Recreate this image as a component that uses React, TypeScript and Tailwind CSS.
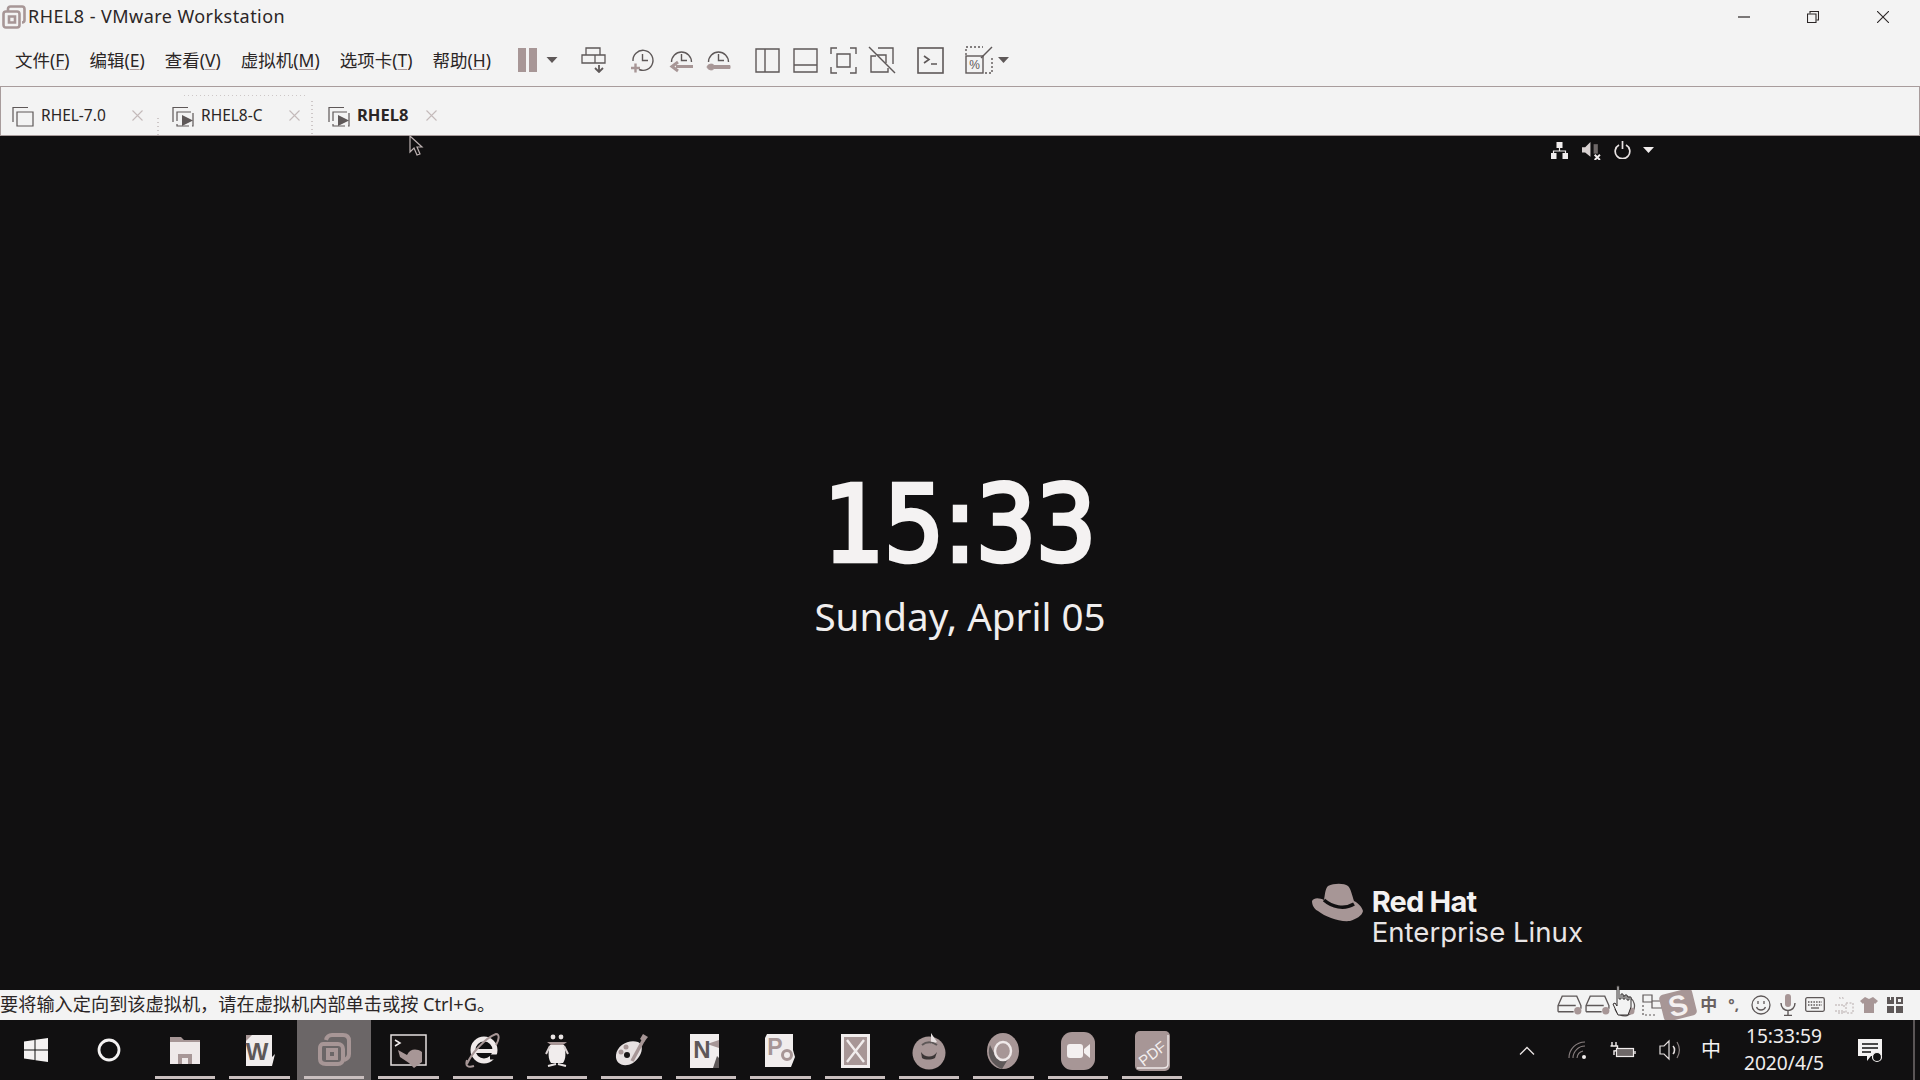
import React from "react";

const M = "#a79696";
const G = "#5e5858";
const MENU: [string, string][] = [
  ["文件", "F"],
  ["编辑", "E"],
  ["查看", "V"],
  ["虚拟机", "M"],
  ["选项卡", "T"],
  ["帮助", "H"],
];

function Caret({ c = G, w = 11, cls = "" }: { c?: string; w?: number; cls?: string }) {
  return (
    <svg width={w} height={6} viewBox="0 0 11 6" className={cls}>
      <path d="M0 0H11L5.5 6Z" fill={c} />
    </svg>
  );
}

function Clock({ kind }: { kind: "plus" | "arrow" | "wrench" }) {
  return (
    <svg width="25" height="25" viewBox="0 0 25 25" fill="none" stroke={G} strokeWidth="1.4">
      <path d={kind === "plus" ? "M3 13A10 10 0 1 1 9 21.5" : "M2.5 14A10 10 0 1 1 22.5 14"} />
      <path d="M12.5 6V12.5H18" />
      {kind === "plus" && <path d="M1 20H10M5.5 15.5V24.5" stroke={M} strokeWidth="2.4" />}
      {kind === "arrow" && <path d="M24 18.5H7M9 14L3 18.5L9 23" stroke={M} strokeWidth="3" />}
      {kind === "wrench" && <path d="M1 18.5C3 15.5 7 15.5 8 17.5H24V20.5H8C7 22.5 3 22.5 1 19.5" fill={M} stroke={M} strokeWidth="1" />}
    </svg>
  );
}

function TabIcon({ play }: { play?: boolean }) {
  return (
    <svg width="22" height="22" viewBox="0 0 22 22" fill="none" stroke={G} strokeWidth="1.2">
      <path d="M1 17V2.5H16" />
      <path d="M5 7H21V21H5Z" strokeDasharray={play ? "14 3" : undefined} />
      {play && <path d="M10 10V21L21 15.5Z" fill={G} stroke="none" />}
    </svg>
  );
}

function TabClose() {
  return (
    <svg width="11" height="11" viewBox="0 0 11 11" stroke="#c4baba" strokeWidth="1.1">
      <path d="M0.5 0.5L10.5 10.5M10.5 0.5L0.5 10.5" />
    </svg>
  );
}

function Tab({ label, bold, play, w, gap }: { label: string; bold?: boolean; play?: boolean; w: string; gap: string }) {
  return (
    <div className={`flex items-center shrink-0 ${w}`}>
      <TabIcon play={play} />
      <span className={`ml-[7px] text-[#2b2626] ${bold ? "font-bold text-[16.5px]" : "text-[15.5px]"}`}>{label}</span>
      <span className={gap}>
        <TabClose />
      </span>
    </div>
  );
}

function DiskIcon() {
  return (
    <svg width="26" height="21" viewBox="0 0 25 20" fill="none" stroke={G} strokeWidth="1.3" className="shrink-0">
      <path d="M1 17V11L5 2H19L23 11V14" />
      <path d="M1 11H18M1 17H16" />
      <circle cx="20" cy="16" r="3.5" fill={M} stroke="none" />
    </svg>
  );
}

function AppIcon({ i }: { i: number }) {
  const common = { width: 40, height: 40, viewBox: "0 0 40 40", className: "overflow-visible" };
  switch (i) {
    case 0:
      return (
        <svg {...common}>
          <path d="M5 7H16L19 10H35V12H5Z" fill={M} />
          <path d="M5 12H35V34H5Z" fill="#efe9e9" />
          <path d="M13 24H27V34H23V28H17V34H13Z" fill={M} />
        </svg>
      );
    case 1:
      return (
        <svg {...common}>
          <path d="M6 5H32V27L35 24L32 36H6Z" fill="#f1eded" />
          <path d="M6 5L12 5L6 11Z" fill={M} />
          <text x="17" y="30" textAnchor="middle" fontSize="24" fontWeight="700" fill={G} fontFamily="Liberation Sans">W</text>
        </svg>
      );
    case 2:
      return (
        <svg {...common} fill="none" stroke={M} strokeWidth="4">
          <path d="M12 10C13 6 15 5 18 5H29C33 5 35 7 35 11V24C35 27 33 29 30 30" />
          <path d="M9 14H24C27 14 29 16 29 19V29C29 32 27 34 24 34H12C8 34 6 32 6 29V18C6 16 7 14 9 14Z" />
          <path d="M14 20H22V28H14Z" />
        </svg>
      );
    case 3:
      return (
        <svg {...common}>
          <rect x="3" y="5" width="35" height="30" fill="#181515" stroke="#e5dfdf" strokeWidth="1.5" />
          <path d="M7 10L12 13L7 16" fill="none" stroke="#f1eded" strokeWidth="1.5" />
          <path d="M10 20L19 25C22 19 28 18 34 22L34 32L26 38L21 33L12 27Z" fill={M} />
        </svg>
      );
    case 4:
      return (
        <svg {...common}>
          <circle cx="21" cy="20" r="11" fill="none" stroke="#efe9e9" strokeWidth="5" />
          <path d="M9 21H33" stroke="#efe9e9" strokeWidth="4" />
          <path d="M27 27L36 27" stroke="#111011" strokeWidth="5" />
          <path d="M4 34C8 24 22 8 33 4C37 4 36 10 33 15" fill="none" stroke={M} strokeWidth="2" />
          <path d="M4 30C2 36 5 38 11 36" fill="none" stroke={M} strokeWidth="2" />
        </svg>
      );
    case 5:
      return (
        <svg {...common}>
          <circle cx="16" cy="7" r="2.4" fill="#e9e3e3" />
          <circle cx="24" cy="7" r="2.4" fill="#e9e3e3" />
          <path d="M10 12H30L26 15H14Z" fill={M} />
          <path d="M13 15H27C29 22 29 29 26 33H14C11 29 11 22 13 15Z" fill="#f1eded" />
          <path d="M13 16L9 24M27 16L31 24" stroke="#d9d1d1" strokeWidth="2" />
          <path d="M11 36L19 34M21 34L29 36" stroke="#e9e3e3" strokeWidth="2" />
        </svg>
      );
    case 6:
      return (
        <svg {...common}>
          <path d="M4 25C5 15 17 9 26 12C33 15 30 27 21 33C12 38 3 34 4 25Z" fill="#e7e1e1" />
          <circle cx="15" cy="25" r="3" fill="#181515" />
          <circle cx="14" cy="17" r="2.5" fill={M} />
          <circle cx="9" cy="22" r="2.5" fill={M} />
          <path d="M20 31L32 9" stroke={M} strokeWidth="3.5" />
          <path d="M31 4L36 7L32 12L28 9Z" fill={M} />
        </svg>
      );
    case 7:
      return (
        <svg {...common}>
          <path d="M4 4H33V28L31 38H4Z" fill="#f1eded" />
          <path d="M21 14L33 10V18Z" fill={M} />
          <path d="M27 38L31 26L33 28V38Z" fill={G} />
          <text x="16" y="28" textAnchor="middle" fontSize="24" fontWeight="700" fill={G} fontFamily="Liberation Sans">N</text>
        </svg>
      );
    case 8:
      return (
        <svg {...common}>
          <path d="M7 4H33V20L35 27L31 37H5V8Z" fill="#f1eded" />
          <text x="15" y="25" textAnchor="middle" fontSize="23" fontWeight="700" fill={M} fontFamily="Liberation Sans">P</text>
          <circle cx="27" cy="25" r="4.5" fill="none" stroke={M} strokeWidth="3" />
        </svg>
      );
    case 9:
      return (
        <svg {...common}>
          <rect x="6" y="4" width="29" height="34" fill="#f1eded" />
          <rect x="9" y="7" width="23" height="28" fill={M} />
          <path d="M12 10L29 32M29 10L12 32" stroke="#f1eded" strokeWidth="2.4" />
        </svg>
      );
    case 10:
      return (
        <svg {...common}>
          <circle cx="20" cy="23" r="16.5" fill={M} />
          <path d="M22 3L28 12L22 14Z" fill="#e7e1e1" />
          <path d="M12 22C16 28 24 28 28 22L26 28C22 30 16 30 13 28Z" fill="#3b3636" />
          <path d="M13 15C18 11 24 12 28 15" stroke={G} strokeWidth="2" fill="none" />
        </svg>
      );
    case 11:
      return (
        <svg {...common}>
          <ellipse cx="20" cy="21" rx="16" ry="18" fill={M} />
          <path d="M7 15C3 26 9 35 19 39L27 26L13 27Z" fill="#5e5858" />
          <ellipse cx="20" cy="21" rx="8" ry="9" fill={M} stroke="#efe9e9" strokeWidth="2.4" />
        </svg>
      );
    case 12:
      return (
        <svg {...common}>
          <rect x="3" y="2" width="34" height="38" rx="11" fill={M} />
          <rect x="9" y="14" width="16" height="14" rx="3" fill="#f4f0f0" />
          <path d="M26 19L32 14V28L26 23Z" fill="#f4f0f0" />
        </svg>
      );
    default:
      return (
        <svg {...common}>
          <rect x="3" y="1" width="35" height="40" rx="5" fill={M} />
          <path d="M36 5V34C36 37 34 38 31 38H5" fill="none" stroke="#efe9e9" strokeWidth="1.4" />
          <text x="20" y="29" textAnchor="middle" fontSize="15" fill="#f4f0f0" transform="rotate(-38 20 23)" fontFamily="Liberation Sans">PDF</text>
        </svg>
      );
  }
}

export default function App() {
  return (
    <div className="relative flex flex-col w-[1920px] h-[1080px] overflow-hidden bg-[#111011] font-['Noto_Sans','Noto_Sans_CJK_SC',sans-serif]">
      {/* window title */}
      <div className="flex items-center h-[33px] bg-[#f3f3f3] shrink-0">
        <svg width="24" height="24" viewBox="0 0 24 24" fill="none" stroke={M} strokeWidth="2.6" className="ml-[2px] mt-[1px] shrink-0">
          <path d="M6 6V4C6 2.5 7 1.5 8.5 1.5H20C21.5 1.5 22.5 2.5 22.5 4V15C22.5 16.5 21.5 17.5 20 17.5" />
          <path d="M4 6.5H15C16.5 6.5 17.5 7.5 17.5 9V20C17.5 21.5 16.5 22.5 15 22.5H4C2.5 22.5 1.5 21.5 1.5 20V9C1.5 7.5 2.5 6.5 4 6.5Z" />
          <path d="M7 11.5H13V17.5H7Z" />
        </svg>
        <span className="ml-[2px] text-[18px] text-[#2b2626] tracking-[0.45px]">RHEL8 - VMware Workstation</span>
        <div className="ml-auto flex items-center">
          <svg width="12" height="12" viewBox="0 0 12 12" stroke="#2b2626" strokeWidth="1.2" className="mr-[57px]">
            <path d="M0 6H12" />
          </svg>
          <svg width="12" height="12" viewBox="0 0 12 12" fill="none" stroke="#2b2626" strokeWidth="1.1" className="mr-[58px]">
            <path d="M3 2.5V0.5H11.5V9H9.5" />
            <path d="M0.5 3H9V11.5H0.5Z" />
          </svg>
          <svg width="12" height="12" viewBox="0 0 12 12" stroke="#2b2626" strokeWidth="1.1" className="mr-[31px]">
            <path d="M0 0L12 12M12 0L0 12" />
          </svg>
        </div>
      </div>

      {/* menu + toolbar */}
      <div className="flex items-center h-[54px] bg-[#f3f3f3] border-b border-[#a89c9c] shrink-0 pl-[15px] pt-[1px]">
        <div className="flex gap-[20px] w-[503px] shrink-0 text-[17.5px] text-[#2b2626] whitespace-nowrap">
          {MENU.map(([t, k]) => (
            <span key={k}>
              {t}(<span className="underline decoration-[#a79696] underline-offset-2">{k}</span>)
            </span>
          ))}
        </div>
        <div className="flex gap-[3px] shrink-0">
          <div className="w-[8px] h-[24px] bg-[#a79696]" />
          <div className="w-[8px] h-[24px] bg-[#a79696]" />
        </div>
        <Caret cls="ml-[9px] shrink-0" w={12} />
        <svg width="25" height="26" viewBox="0 0 25 26" fill="none" stroke={G} strokeWidth="1.3" className="ml-[23px] shrink-0">
          <path d="M5 8V1H19V8" />
          <path d="M1 8H24V16H1Z" />
          <path d="M14 8V16" />
          <path d="M18 18V24M14 21L18 25L22 21" strokeWidth="1.8" />
        </svg>
        <div className="ml-[24px] shrink-0"><Clock kind="plus" /></div>
        <div className="ml-[14px] shrink-0"><Clock kind="arrow" /></div>
        <div className="ml-[12px] shrink-0"><Clock kind="wrench" /></div>
        <svg width="25" height="25" viewBox="0 0 25 25" fill="none" stroke={G} strokeWidth="1.4" className="ml-[24px] shrink-0">
          <path d="M1 1H24V24H1Z M10 1V24" />
        </svg>
        <svg width="25" height="25" viewBox="0 0 25 25" fill="none" stroke={G} strokeWidth="1.4" className="ml-[13px] shrink-0">
          <path d="M1 1H24V24H1Z M1 17H24" />
        </svg>
        <svg width="27" height="27" viewBox="0 0 27 27" fill="none" stroke={G} strokeWidth="1.4" className="ml-[12px] shrink-0">
          <path d="M1 7V1H7M20 1H26V7M26 20V26H20M7 26H1V20" />
          <path d="M7 7H20V20H7Z" />
        </svg>
        <svg width="28" height="28" viewBox="0 0 28 28" fill="none" stroke={G} strokeWidth="1.4" className="ml-[11px] shrink-0">
          <path d="M10 2H25V18M20 22V26H3V10H8" />
          <path d="M9 9H18V17" />
          <path d="M1 1L27 27" />
        </svg>
        <svg width="27" height="27" viewBox="0 0 27 27" fill="none" stroke={G} strokeWidth="1.6" className="ml-[21px] shrink-0">
          <rect x="1" y="1" width="25" height="25" />
          <path d="M7 9L12 12.5L7 16M14 17H20" />
        </svg>
        <svg width="28" height="28" viewBox="0 0 28 28" fill="none" stroke={G} strokeWidth="1.4" className="ml-[21px] shrink-0">
          <path d="M1 9V1H18" strokeDasharray="2 2" />
          <path d="M27 12V27H20" strokeDasharray="2 2" />
          <path d="M16 12L27 1" />
          <rect x="1" y="10" width="17" height="17" />
          <text x="9.5" y="23" textAnchor="middle" fontSize="12" fill={G} stroke="none" fontFamily="Liberation Sans">%</text>
        </svg>
        <Caret cls="ml-[5px] shrink-0" />
      </div>

      {/* tabs */}
      <div className="relative flex items-center h-[48px] bg-[#f3f3f3] border-r border-l border-[#a89c9c] shrink-0 pl-[11px] pt-[9px]">
        <Tab label="RHEL-7.0" w="w-[160px]" gap="ml-[26px] flex" />
        <Tab label="RHEL8-C" play w="w-[156px]" gap="ml-[26px] flex" />
        <Tab label="RHEL8" bold play w="w-[160px]" gap="ml-[18px] flex" />
        <svg width="160" height="40" viewBox="0 0 160 40" fill="none" stroke="#a89c9c" strokeDasharray="1 3" className="absolute left-[155px] top-[8px]">
          <path d="M2 40V20M28 0H150M156 6V40" />
        </svg>
      </div>

      {/* guest display */}
      <div className="relative flex flex-col flex-1 min-h-0 bg-[#111011] border-t border-[#a89c9c]">
        <div className="flex items-center justify-end pr-[266px] pt-[5px] h-[23px]">
          <svg width="17" height="17" viewBox="0 0 17 17" fill="#f1eded" className="mr-[14px]">
            <rect x="5.5" y="0" width="6" height="6" />
            <path d="M8.5 6V9M2.5 11V9H14.5V11" stroke="#f1eded" fill="none" strokeWidth="1.2" />
            <rect x="0" y="11" width="5.5" height="6" />
            <rect x="11.5" y="11" width="5.5" height="6" />
          </svg>
          <svg width="19" height="19" viewBox="0 0 18 18" className="mr-[13px]">
            <path d="M0 6H3L8 1V15L3 11H0Z" fill="#d8d1d1" />
            <path d="M11 3H15V12H11Z" fill="#6e6868" />
            <path d="M12 13L17 18M17 13L12 18" stroke="#f1eded" strokeWidth="1.8" />
          </svg>
          <svg width="17" height="18" viewBox="0 0 17 18" fill="none" stroke="#e9e3e3" strokeWidth="1.7" className="mr-[12px]">
            <path d="M5 4A7.3 7.3 0 1 0 12 4M8.5 0V8" />
          </svg>
          <Caret c="#f1eded" />
        </div>

        <div className="flex flex-col items-center mt-[306px]">
          <div className="font-['DejaVu_Sans_Condensed','DejaVu_Sans',sans-serif] font-normal text-[105px] leading-[120px] text-[#f4f2f2] [-webkit-text-stroke:4.5px_#f4f2f2]">15:33</div>
          <div className="mt-[6px] text-[38.6px] leading-[50px] text-[#f0eeee]">Sunday, April 05</div>
        </div>

        <div className="flex items-center justify-end mt-auto pr-[337px] pb-[39px]">
          <svg width="52" height="40" viewBox="0 0 52 40" className="mr-[8px] mb-[28px]">
            <path d="M16 3C22 0 32 0 36 3C39 6 40 12 42 18C46 20 50 24 51 28C50 33 44 36 38 38C26 39 14 34 6 28C2 26 0 22 0 18C2 14 8 15 12 17C13 12 13 6 16 3Z" fill={M} />
            <path d="M12 17C20 24 32 27 42 21" fill="none" stroke="#111011" strokeWidth="3.5" />
          </svg>
          <div className="flex flex-col font-['Inter',sans-serif]">
            <span className="text-[29px] leading-[30px] font-bold text-[#f4f2f2] tracking-[-0.8px]">Red Hat</span>
            <span className="text-[27.6px] leading-[30px] text-[#e9e5e5]">Enterprise Linux</span>
          </div>
        </div>

        <svg width="16" height="22" viewBox="0 0 16 22" className="absolute left-[409px] top-[-1px]">
          <path d="M1 1V17L5 13L8 20L11 19L8 12H13Z" fill="#111011" stroke="#bdb2b2" strokeWidth="1.2" />
        </svg>
      </div>

      {/* status bar */}
      <div className="flex items-center h-[30px] bg-[#f3f3f3] shrink-0 border-b border-[#f3f3f3]">
        <span className="text-[18.2px] text-[#2b2626] whitespace-nowrap">要将输入定向到该虚拟机，请在虚拟机内部单击或按 Ctrl+G。</span>
        <div className="ml-auto flex items-center pr-[17px] h-full">
          <DiskIcon />
          <div className="ml-[2px]"><DiskIcon /></div>
          <svg width="26" height="24" viewBox="0 0 26 24" fill="none" stroke={G} strokeWidth="1.3" className="shrink-0">
            <path d="M12 3A10 10 0 1 1 4 16" />
            <circle cx="20" cy="18" r="3.5" fill={M} stroke="none" />
          </svg>
          <svg width="26" height="22" viewBox="0 0 26 22" fill="none" stroke={G} strokeWidth="1.2" className="ml-[5px] shrink-0">
            <path d="M1 1H10V8H1ZM10 7H20V14H10Z" />
            <path d="M1 11V21H15" strokeDasharray="2 2" />
          </svg>
          <svg width="38" height="36" viewBox="0 0 36 34" className="ml-[-9px] shrink-0 overflow-visible">
            <g transform="rotate(-14 18 17)">
              <rect x="2" y="4" width="32" height="26" rx="4" fill={M} />
              <text x="18" y="27" textAnchor="middle" fontSize="27" fontWeight="700" fill="#f4f0f0" fontFamily="Liberation Sans">S</text>
            </g>
          </svg>
          <span className="ml-[3px] text-[17px] leading-none text-[#6a6262] font-bold">中</span>
          <span className="ml-[11px] text-[15px] leading-none text-[#6a6262] font-bold">°,</span>
          <svg width="20" height="20" viewBox="0 0 20 20" fill="none" stroke={G} strokeWidth="1.3" className="ml-[12px] shrink-0">
            <circle cx="10" cy="10" r="9" />
            <path d="M5.5 12C7 16 13 16 14.5 12" />
            <path d="M7 6V9M13 6V9" />
          </svg>
          <svg width="16" height="22" viewBox="0 0 16 22" fill="none" stroke={G} strokeWidth="1.4" className="ml-[9px] shrink-0">
            <rect x="5" y="0" width="6" height="13" rx="3" fill={M} stroke="none" />
            <path d="M1 9C1 19 15 19 15 9M8 16V21M4 21.5H12" />
          </svg>
          <svg width="20" height="15" viewBox="0 0 20 15" fill="none" stroke={G} strokeWidth="1.3" className="ml-[9px] shrink-0">
            <rect x="0.7" y="0.7" width="18.6" height="13.6" rx="1.5" />
            <path d="M3 5H17M3 8H17" strokeDasharray="1.5 1.2" />
            <path d="M6 11H14" />
          </svg>
          <svg width="20" height="20" viewBox="0 0 20 20" fill="none" stroke="#b6abab" strokeWidth="1" className="ml-[9px] shrink-0">
            <path d="M6 2C5 3 7 4 6 5M9 2C8 3 10 4 9 5M1 10H10V13M1 16H10V18H3" strokeDasharray="2 1" />
            <path d="M12 8H19V18H12Z" strokeDasharray="2 1.5" />
          </svg>
          <svg width="18" height="18" viewBox="0 0 18 18" fill={M} className="ml-[6px] shrink-0">
            <path d="M5 1L9 3L13 1L18 5L15 8L14 7V17H4V7L3 8L0 5Z" />
          </svg>
          <svg width="16" height="16" viewBox="0 0 16 16" fill={G} className="ml-[9px] shrink-0">
            <path d="M0 0H3V3H4V0H7V7H0ZM9 0H16V7H9ZM0 9H7V16H0ZM9 9H16V16H9Z" />
            <path d="M11 2H14V5H11Z" fill="#f3f3f3" />
          </svg>
        </div>
      </div>

      {/* hand cursor over the status bar */}
      <svg width="20" height="31" viewBox="0 0 20 31" className="absolute left-[1612px] top-[985px]">
        <path d="M5 1H7V14H9V9H11V14H13V10H15V15H17V12H19V22L16 30H6L1 19L3 18L5 21Z" fill="#f3f3f3" stroke="#332e2e" strokeWidth="1" />
      </svg>

      {/* taskbar */}
      <div className="flex items-stretch h-[60px] bg-[#111011] shrink-0">
        <div className="flex items-center justify-center w-[72px] shrink-0">
          <svg width="24" height="24" viewBox="0 0 24 24" fill="#f4f2f2">
            <path d="M0 3.5L10.5 2V11.5H0ZM11.5 1.8L24 0V11.5H11.5ZM0 12.5H10.5V22L0 20.5ZM11.5 12.5H24V24L11.5 22.2Z" />
          </svg>
        </div>
        <div className="flex items-center justify-center w-[73px] shrink-0">
          <svg width="24" height="24" viewBox="0 0 24 24" fill="none" stroke="#f4f2f2" strokeWidth="2.8">
            <circle cx="12" cy="12" r="10" />
          </svg>
        </div>
        <div className="ml-[3px] flex">
          {Array.from({ length: 14 }, (_, i) => (
            <div
              key={i}
              className={`flex flex-col items-center justify-center w-[74.4px] relative ${i === 2 ? "bg-[#6b6667]" : ""}`}
            >
              <AppIcon i={i} />
              <div className="absolute bottom-[1px] left-[7px] right-[7px] h-[3px] bg-[#c9bfbf]" />
            </div>
          ))}
        </div>
        <div className="ml-auto flex items-center">
          <svg width="16" height="9" viewBox="0 0 16 9" fill="none" stroke="#e9e3e3" strokeWidth="1.3" className="mr-[33px]">
            <path d="M1 8.5L8 1.5L15 8.5" />
          </svg>
          <svg width="20" height="18" viewBox="0 0 20 18" fill="none" stroke="#8a8080" strokeWidth="1.1" className="mr-[22px]">
            <path d="M1 17A16 16 0 0 1 17 1M5 17A12 12 0 0 1 17 5M9 17A8 8 0 0 1 15 10" />
            <circle cx="16" cy="16" r="2" fill="#f1eded" stroke="none" />
          </svg>
          <svg width="26" height="18" viewBox="0 0 26 18" fill="none" stroke="#f1eded" strokeWidth="1.4" className="mr-[23px]">
            <path d="M2 1V5M6 1V5M0.5 5H7.5V8C7.5 10 6 10 4 10V14" />
            <rect x="6.5" y="7.5" width="17" height="8" fill="#6e6868" stroke="#f1eded" strokeWidth="1.2" />
            <path d="M25 10V13" />
          </svg>
          <svg width="24" height="22" viewBox="0 0 24 22" fill="none" stroke="#e5dfdf" strokeWidth="1.2" className="mr-[18px]">
            <path d="M1 7H5L10 2V20L5 15H1Z" />
            <path d="M14 7C16 9 16 13 14 15" strokeWidth="1.6" />
            <path d="M18 3C21 8 21 14 18 19" stroke="#8a8080" />
          </svg>
          <span className="text-[20px] leading-none text-[#f4f2f2] w-[36px]">中</span>
          <div className="flex flex-col items-center w-[94px] text-[19.2px] leading-[27px] mb-[2px] text-[#efeded]">
            <span>15:33:59</span>
            <span>2020/4/5</span>
          </div>
          <svg width="26" height="26" viewBox="0 0 26 26" className="ml-[26px] mr-[30px]">
            <path d="M1 2H25V19H14L10 24V19H1Z" fill="#f4f2f2" />
            <path d="M5 7H21M5 11H21M5 15H14" stroke="#111011" strokeWidth="1.4" />
            <circle cx="20" cy="20" r="4.5" fill="#111011" stroke="#f4f2f2" strokeWidth="1.2" />
          </svg>
          <div className="w-[2px] h-full bg-[#5a5556] mr-[5px]" />
        </div>
      </div>
    </div>
  );
}
